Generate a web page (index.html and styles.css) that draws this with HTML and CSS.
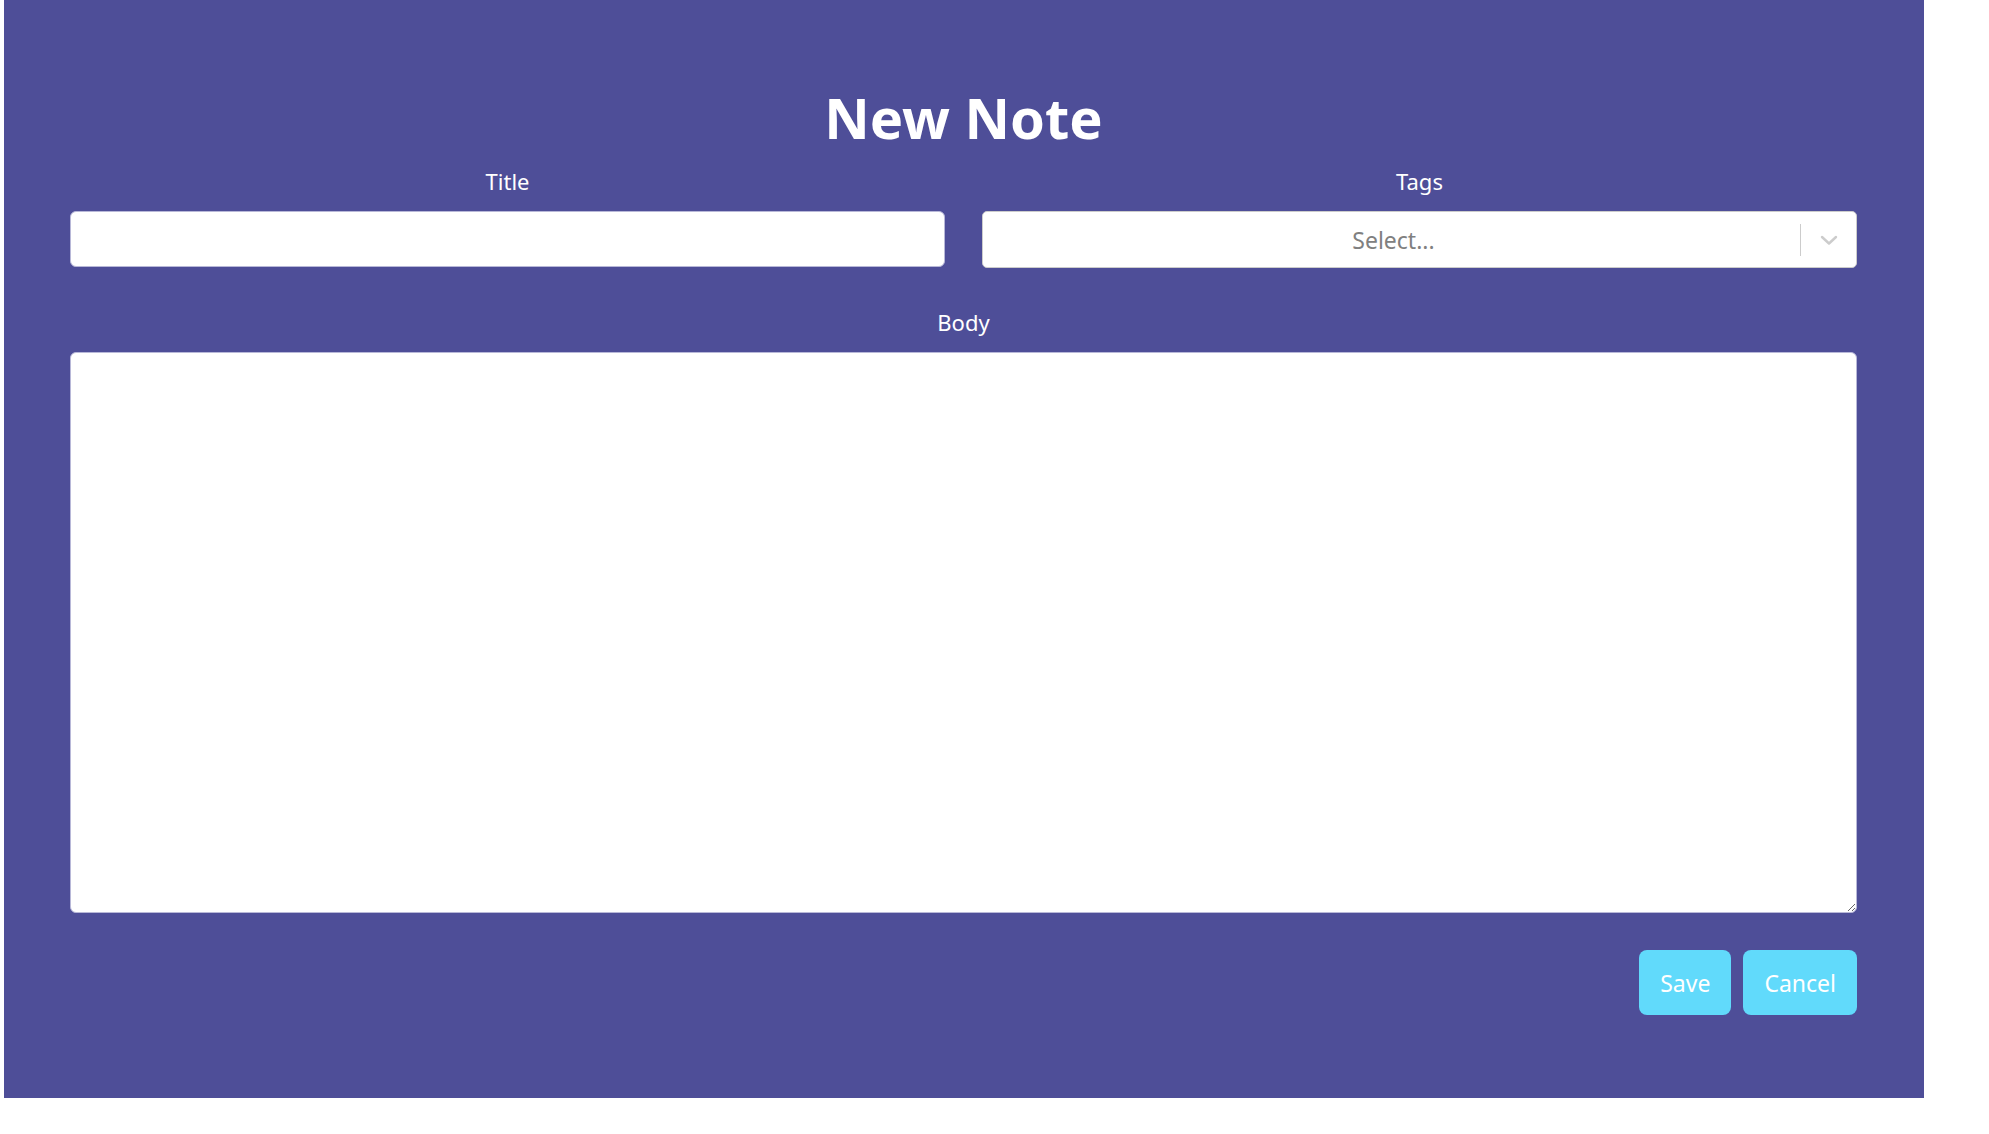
FILE: index.html
```html
<!DOCTYPE html>
<html lang="en">
<head>
<meta charset="utf-8">
<title>New Note</title>
<link rel="stylesheet" href="styles.css">
</head>
<body>
<div class="panel">
  <h1 class="heading">New Note</h1>
  <form class="form">
    <div class="row">
      <div class="field">
        <label class="label" for="title">Title</label>
        <input class="input" id="title" type="text">
      </div>
      <div class="field">
        <label class="label">Tags</label>
        <div class="select">
          <div class="select-value">Select...</div>
          <div class="select-indicators">
            <span class="select-sep"></span>
            <svg class="select-chevron" width="24" height="24" viewBox="0 0 24 24"><path d="M5 9 L12 15.5 L19 9" fill="none" stroke="#cccccc" stroke-width="2.4" stroke-linecap="round" stroke-linejoin="round"/></svg>
          </div>
        </div>
      </div>
    </div>
    <div class="field body-field">
      <label class="label" for="body">Body</label>
      <textarea class="textarea" id="body"></textarea>
    </div>
    <div class="actions">
      <button type="button" class="btn">Save</button>
      <button type="button" class="btn">Cancel</button>
    </div>
  </form>
</div>
</body>
</html>
```
FILE: styles.css
```css
html, body {
  margin: 0;
  padding: 0;
  background: #ffffff;
}
body {
  font-family: "Noto Sans", "Open Sans", sans-serif;
}
.panel {
  width: 1920px;
  height: 1098px;
  margin-left: 4px;
  background: #4e4e98;
  box-sizing: border-box;
  padding: 81px 67px 0 66px;
  color: #ffffff;
}
.heading {
  margin: 0;
  font-size: 56px;
  line-height: 72px;
  font-weight: 700;
  text-align: center;
}
.form {
  margin-top: 13px;
  display: flex;
  flex-direction: column;
}
.row {
  display: flex;
  gap: 37px;
}
.field {
  flex: 1;
  display: flex;
  flex-direction: column;
}
.label {
  font-size: 22px;
  line-height: 30px;
  text-align: center;
  margin-bottom: 15px;
}
.input {
  height: 56px;
  box-sizing: border-box;
  border: 1px solid #b8b8d8;
  border-radius: 6px;
  background: #fff;
  padding: 0 12px;
  font-size: 22px;
  font-family: inherit;
  outline: none;
}
.select {
  height: 57px;
  box-sizing: border-box;
  border: 1px solid #cccccc;
  border-radius: 5px;
  background: #fff;
  display: flex;
  align-items: center;
}
.select-value {
  flex: 1;
  text-align: center;
  color: #808080;
  font-size: 23px;
  padding-left: 4px;
}
.select-indicators {
  display: flex;
  align-items: center;
  align-self: stretch;
}
.select-sep {
  width: 1px;
  height: 32px;
  background: #cccccc;
  margin-right: 16px;
}
.select-chevron {
  margin-right: 15px;
}
.body-field {
  margin-top: 39px;
}
.textarea {
  height: 561px;
  box-sizing: border-box;
  border: 1px solid #b8b8d8;
  border-radius: 6px;
  background: #fff;
  font-family: inherit;
  font-size: 22px;
  padding: 8px;
  outline: none;
  resize: vertical;
}
.actions {
  margin-top: 37px;
  display: flex;
  justify-content: flex-end;
  gap: 12px;
}
.btn {
  height: 65px;
  padding: 0 21px;
  background: #61dafb;
  color: #ffffff;
  border: none;
  border-radius: 8px;
  font-family: inherit;
  font-size: 23px;
  cursor: pointer;
}
```
